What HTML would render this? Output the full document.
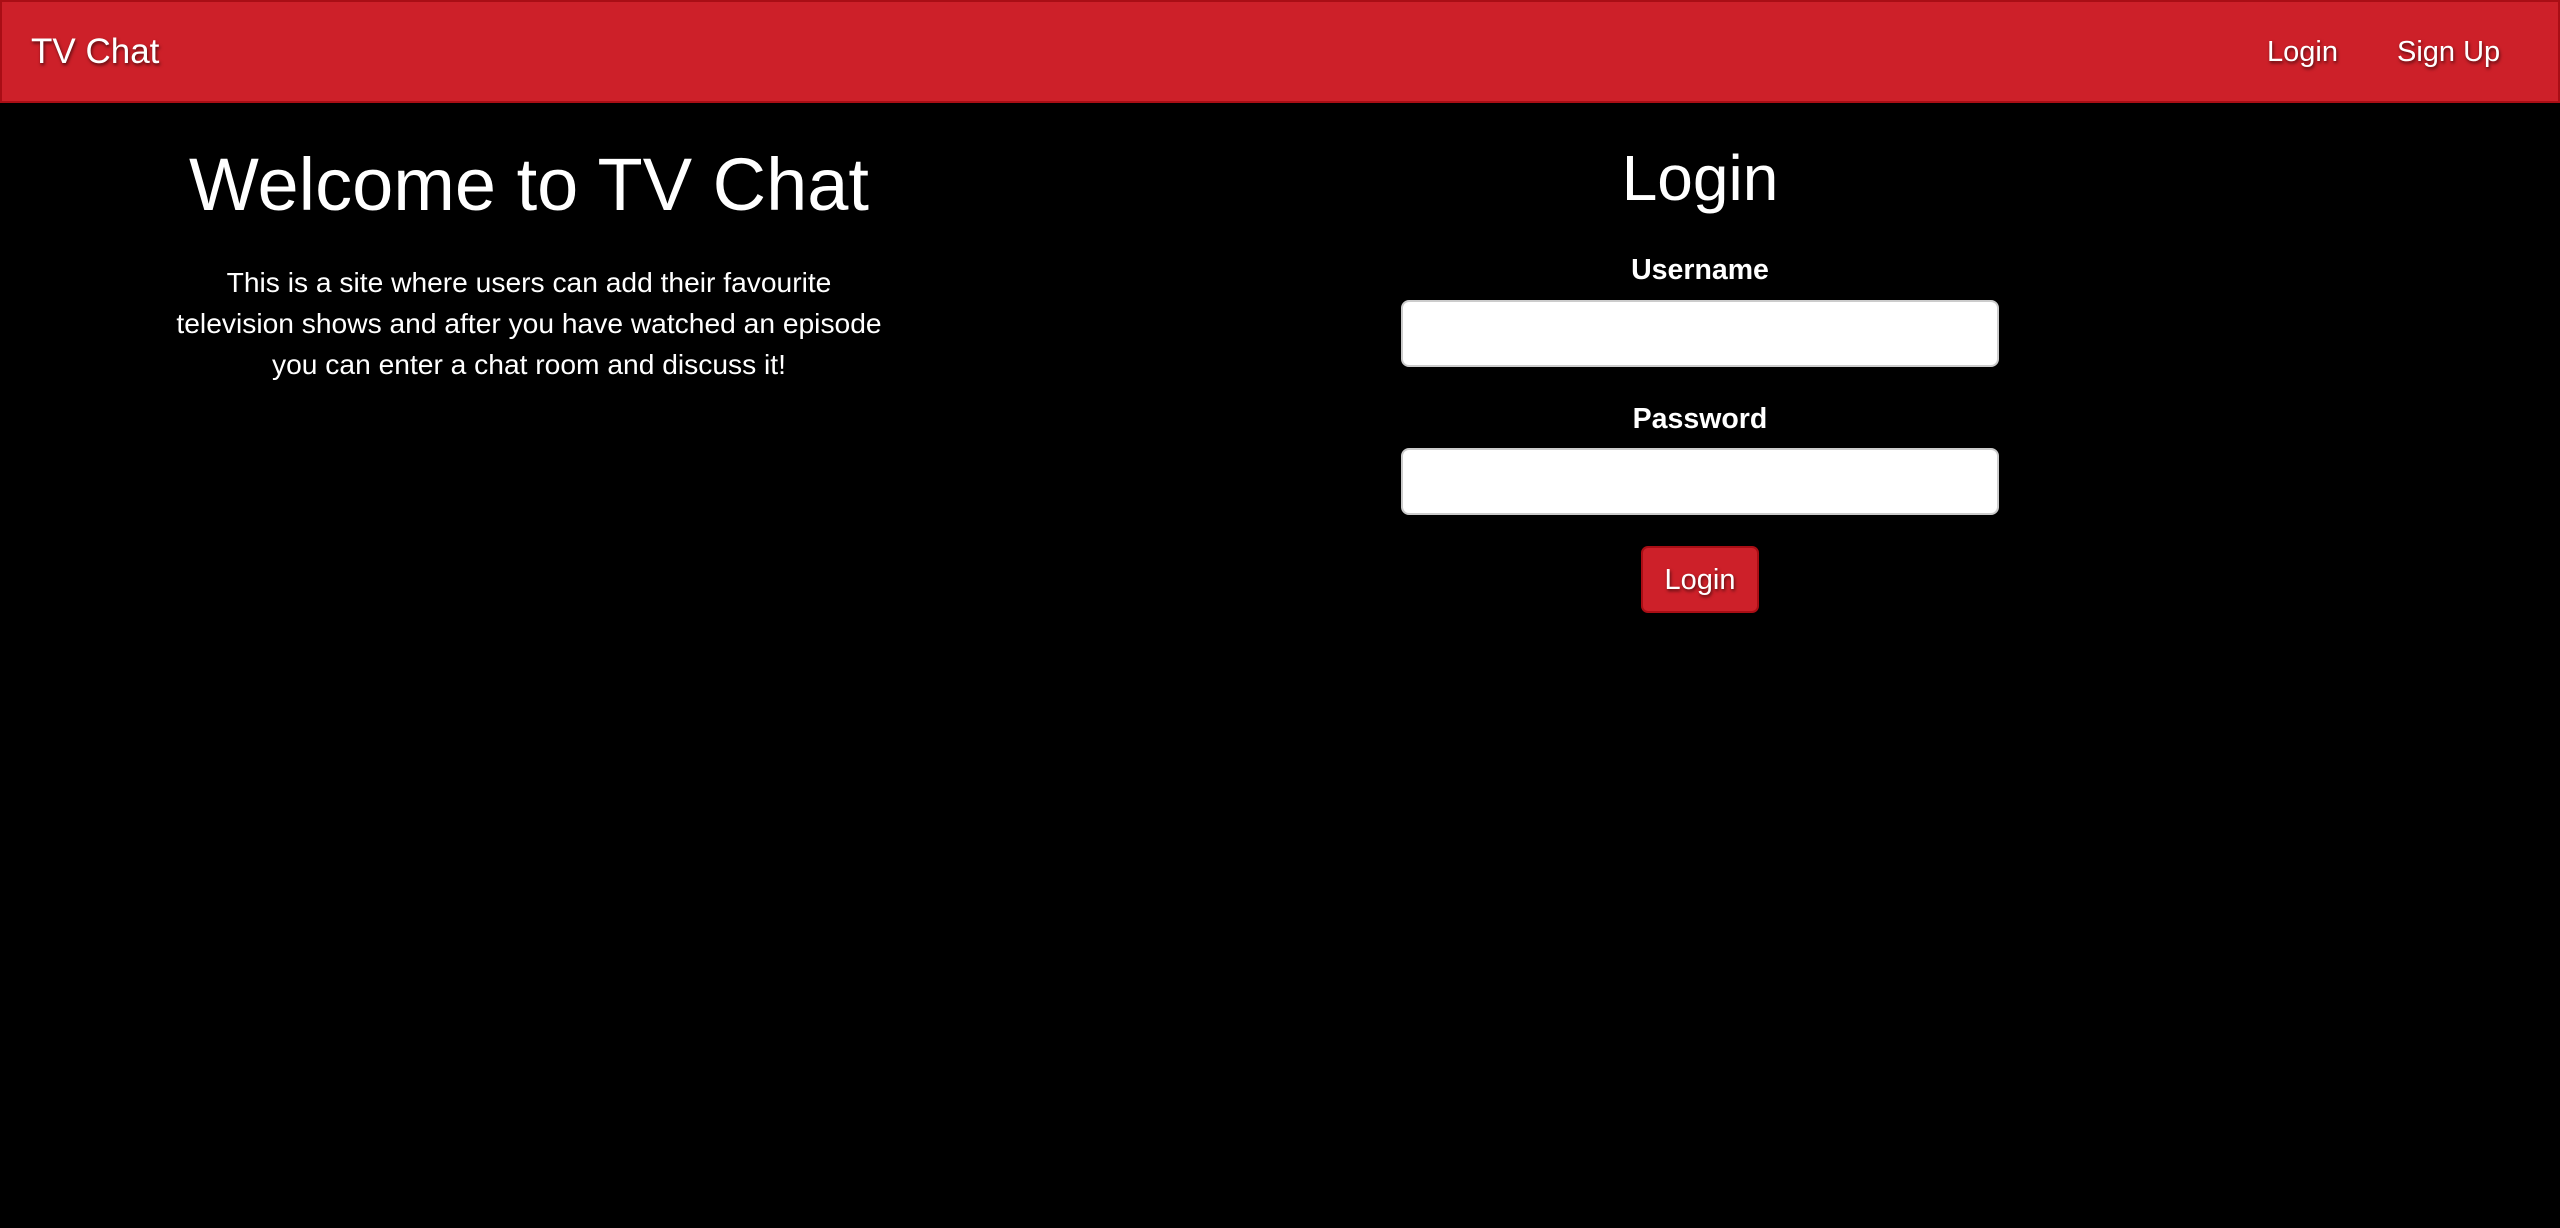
<!DOCTYPE html>
<html><head><meta charset="utf-8"><style>
html,body{margin:0;padding:0;width:2560px;height:1228px;background:#000;overflow:hidden;font-family:"Liberation Sans",Arial,sans-serif;color:#fff}
.nav{position:absolute;left:0;top:0;width:2560px;height:103px;box-sizing:border-box;background:#cd2029;border:2px solid #a90e15}
.t{position:absolute;white-space:nowrap;text-shadow:1px 2px 3px rgba(0,0,0,.6)}
.c{position:absolute;text-align:center;white-space:nowrap}
.inp{position:absolute;left:1401px;width:598px;height:67px;box-sizing:border-box;background:#fff;border:2px solid #ccc;border-radius:8px}
.btn{position:absolute;left:1641px;top:546px;width:118px;height:67px;box-sizing:border-box;background:#cd2029;border:2px solid #a90e15;border-radius:7px}
</style></head><body>
<div class="nav"></div>
<div class="t" style="left:31px;top:31px;font-size:35px;line-height:42px">TV Chat</div>
<div class="t" style="left:2267px;top:35px;font-size:29px;line-height:34px">Login</div>
<div class="t" style="left:2397px;top:35px;font-size:29px;line-height:34px">Sign Up</div>

<div class="c" style="left:129px;width:800px;top:141px;font-size:74px;line-height:88px">Welcome to TV Chat</div>
<div class="c" style="left:129px;width:800px;top:262px;font-size:28.2px;line-height:41px">This is a site where users can add their favourite<br>television shows and after you have watched an episode<br>you can enter a chat room and discuss it!</div>

<div class="c" style="left:1400px;width:600px;top:139px;font-size:64px;line-height:78px">Login</div>
<div class="c" style="left:1400px;width:600px;top:253px;font-size:28.5px;font-weight:bold;line-height:34px">Username</div>
<div class="inp" style="top:300px"></div>
<div class="c" style="left:1400px;width:600px;top:402px;font-size:28.5px;font-weight:bold;line-height:34px">Password</div>
<div class="inp" style="top:448px"></div>
<div class="btn"></div>
<div class="t" style="left:1641px;width:118px;text-align:center;top:563px;font-size:29px;line-height:34px">Login</div>
</body></html>
